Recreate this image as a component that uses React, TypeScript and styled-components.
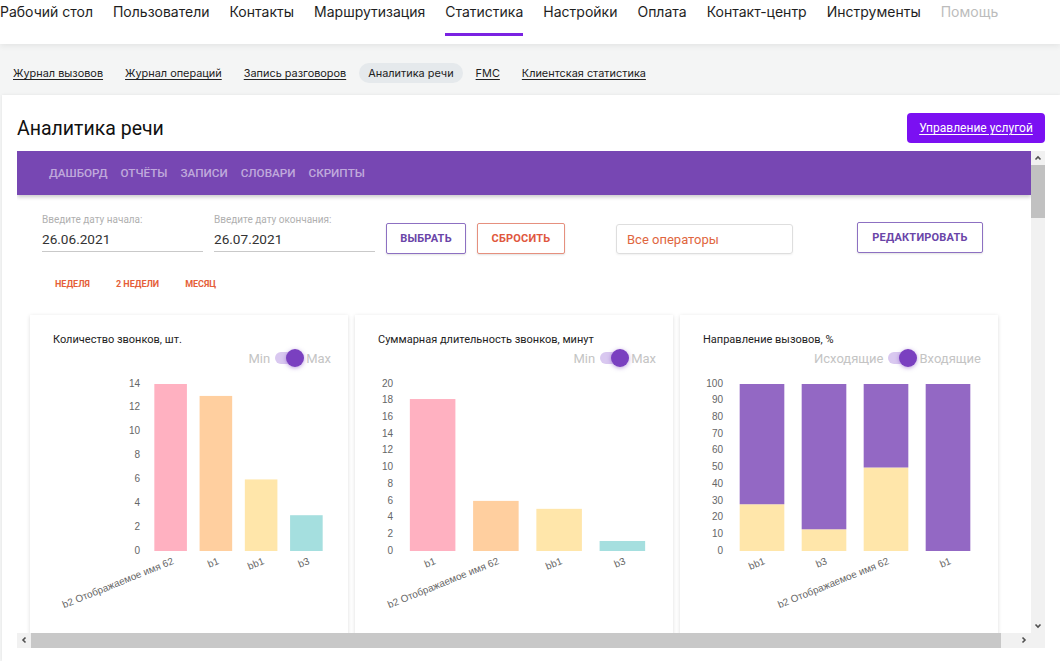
import React from 'react';
import styled, { createGlobalStyle } from 'styled-components';

const GlobalStyle = createGlobalStyle`
  html, body { margin: 0; padding: 0; }
  body { background: #f4f5f5; font-family: Inter, "Noto Sans", sans-serif; overflow: hidden; }
  * { box-sizing: border-box; }
`;

const Page = styled.div`
  width: 1060px;
  height: 661px;
  display: flex;
  flex-direction: column;
  overflow: hidden;
`;

const TopNav = styled.nav`
  height: 44px;
  flex-shrink: 0;
  background: #fff;
  display: flex;
  align-items: flex-start;
  gap: 20px;
  box-shadow: 0 2px 6px rgba(0, 0, 0, 0.07);
  position: relative;
  z-index: 1;
`;

const NavItem = styled.a<{ $active?: boolean; $muted?: boolean }>`
  display: block;
  height: 36px;
  padding-top: 2px;
  line-height: 20px;
  font-size: 14px;
  color: ${(p) => (p.$muted ? '#bcbcbc' : '#1e1e1e')};
  border-bottom: 3px solid ${(p) => (p.$active ? '#7a22e2' : 'transparent')};
  white-space: nowrap;
  cursor: pointer;
`;

const SubNav = styled.div`
  height: 51px;
  flex-shrink: 0;
  display: flex;
  align-items: flex-start;
  padding: 19px 0 0 4px;
  gap: 4px;
`;

const SubLink = styled.a<{ $active?: boolean }>`
  display: block;
  height: 20px;
  line-height: 20px;
  padding: 0 9px;
  font-size: 10.9px;
  color: #222;
  border-radius: 10px;
  background: ${(p) => (p.$active ? '#e5e9ec' : 'transparent')};
  text-decoration: ${(p) => (p.$active ? 'none' : 'underline')};
  text-underline-offset: 2px;
  white-space: nowrap;
  cursor: pointer;
`;

const MainCard = styled.section`
  flex: 1;
  margin-left: 2px;
  background: #fff;
  box-shadow: 0 0 3px rgba(0, 0, 0, 0.08);
  padding: 18px 15px 0 15px;
  display: flex;
  flex-direction: column;
`;

const HeaderRow = styled.div`
  height: 30px;
  display: flex;
  align-items: center;
  justify-content: space-between;
  margin-bottom: 8px;
`;

const PageTitle = styled.h1`
  margin: 0;
  font-family: Roboto, Arial, sans-serif;
  font-weight: 400;
  font-size: 19.5px;
  color: #111;
`;

const ManageButton = styled.button`
  width: 138px;
  height: 30px;
  border: none;
  border-radius: 4px;
  background: #7b10f2;
  color: #fff;
  font-family: Roboto, Arial, sans-serif;
  font-size: 12px;
  text-decoration: underline;
  text-underline-offset: 2px;
  cursor: pointer;
`;

const Frame = styled.div`
  display: grid;
  grid-template-columns: 1014px 14px;
  grid-template-rows: 482px 15px;
  font-family: Roboto, Arial, sans-serif;
`;

const Viewport = styled.div`
  overflow: hidden;
  background: #fff;
`;

const Toolbar = styled.div`
  height: 44px;
  background: #7747b3;
  display: flex;
  align-items: center;
  gap: 13px;
  padding-left: 32px;
  box-shadow: 0 2px 4px rgba(0, 0, 0, 0.22);
`;

const ToolTab = styled.span`
  font-size: 11.7px;
  font-weight: 500;
  color: rgba(255, 255, 255, 0.55);
  text-transform: uppercase;
`;

const FilterRow = styled.div`
  margin-top: 19px;
  padding-left: 25px;
  display: flex;
  align-items: flex-end;
  gap: 11px;
`;

const DateField = styled.div`
  width: 161px;
  margin-bottom: 2px;
  display: flex;
  flex-direction: column;
  border-bottom: 1px solid #c9c9c9;
  padding-bottom: 2px;
`;

const DateLabel = styled.span`
  font-size: 10px;
  line-height: 12px;
  color: #b0b0b0;
`;

const DateValue = styled.span`
  margin-top: 3px;
  font-size: 13.6px;
  line-height: 20px;
  color: #333;
`;

const OutlineButton = styled.button<{ $tone: 'purple' | 'red'; $w: number; $shift?: number; $lift?: number }>`
  width: ${(p) => p.$w}px;
  height: 31px;
  margin-left: ${(p) => p.$shift ?? 0}px;
  margin-bottom: ${(p) => p.$lift ?? 0}px;
  background: #fff;
  border: 1px solid ${(p) => (p.$tone === 'purple' ? '#8d70c2' : '#e6907e')};
  border-radius: 2px;
  box-shadow: 0 1px 2px rgba(0, 0, 0, 0.12);
  color: ${(p) => (p.$tone === 'purple' ? '#6a45a8' : '#e0583e')};
  font-family: Roboto, Arial, sans-serif;
  font-size: 11px;
  font-weight: 700;
  letter-spacing: 0.2px;
  cursor: pointer;
`;

const Select = styled.div`
  width: 177px;
  height: 30px;
  margin-left: 40px;
  border: 1px solid #dedede;
  border-radius: 3px;
  box-shadow: 0 1px 2px rgba(0, 0, 0, 0.06);
  display: flex;
  align-items: center;
  padding-left: 10px;
  font-size: 13px;
  color: #e0663e;
`;

const PeriodRow = styled.div`
  margin-top: 20px;
  padding-left: 25px;
  display: flex;
`;

const PeriodButton = styled.button`
  height: 20px;
  padding: 0 13px;
  border: none;
  background: transparent;
  font-family: Roboto, Arial, sans-serif;
  font-size: 9px;
  font-weight: 700;
  color: #e55f3a;
  cursor: pointer;
`;

const CardsRow = styled.div`
  margin-top: 21px;
  padding-left: 13px;
  display: flex;
  gap: 7px;
`;

const ChartCard = styled.div`
  width: 318px;
  height: 330px;
  flex-shrink: 0;
  background: #fff;
  box-shadow: 0 1px 4px rgba(0, 0, 0, 0.14);
  display: flex;
  flex-direction: column;
`;

const CardHead = styled.div`
  padding: 18px 17px 0 23px;
`;

const CardTitle = styled.div`
  font-size: 11px;
  line-height: 14px;
  color: #222;
`;

const ToggleRow = styled.div`
  height: 22px;
  display: flex;
  justify-content: flex-end;
  align-items: center;
  gap: 5px;
  font-size: 13px;
  color: #c4c4c4;
`;

const SwitchTrack = styled.span`
  width: 26px;
  height: 12px;
  border-radius: 6px;
  background: #d9c8f0;
  display: flex;
  align-items: center;
  justify-content: flex-end;
`;

const SwitchThumb = styled.span`
  width: 18px;
  height: 18px;
  margin-right: -3px;
  border-radius: 50%;
  background: #7a40c0;
  box-shadow: 0 1px 4px rgba(122, 64, 192, 0.5);
`;

const ChartSvg = styled.svg`
  display: block;
  font-family: "Liberation Sans", Arial, sans-serif;
`;

const ScrollV = styled.div`
  background: #f1f1f1;
  display: flex;
  flex-direction: column;
`;

const ScrollH = styled.div`
  background: #f1f1f1;
  display: flex;
`;

const ScrollCorner = styled.div`
  background: #f1f1f1;
`;

const ArrowBox = styled.div`
  width: 14px;
  height: 14px;
  flex-shrink: 0;
  display: flex;
  align-items: center;
  justify-content: center;
`;

const Spacer = styled.div`
  flex: 1;
`;

const ThumbV = styled.div`
  height: 53px;
  background: #c1c1c1;
`;

const ThumbH = styled.div`
  width: 970px;
  height: 15px;
  background: #c8c8c8;
`;

const Chevron = ({ dir }: { dir: 'up' | 'down' | 'left' | 'right' }) => {
  const rot = { up: 0, right: 90, down: 180, left: 270 }[dir];
  return (
    <svg width="8" height="8" viewBox="0 0 8 8">
      <polyline
        points="1.5,5.5 4,3 6.5,5.5"
        fill="none"
        stroke="#505050"
        strokeWidth="1.6"
        transform={`rotate(${rot} 4 4)`}
      />
    </svg>
  );
};

type Seg = { value: number; color: string };
type BarDef = { label: string; segs: Seg[] };

const PINK = '#ffb1c1';
const ORANGE = '#ffcf9f';
const YELLOW = '#ffe6aa';
const TEAL = '#a5dfdf';
const PURPLE = '#9368c4';

const Y0 = 182;
const YTOP = 15;
const PLOT_RIGHT = 299;

function BarChart({ yMax, yStep, plotLeft, bars, ratio }: { yMax: number; yStep: number; plotLeft: number; bars: BarDef[]; ratio: number }) {
  const ticks: number[] = [];
  for (let v = 0; v <= yMax; v += yStep) ticks.push(v);
  const scale = (Y0 - YTOP) / yMax;
  const pitch = (PLOT_RIGHT - plotLeft) / bars.length;
  const bw = pitch * ratio;
  return (
    <ChartSvg width={318} height={276} viewBox="0 0 318 276">
      {ticks.map((t) => (
        <text key={t} x={plotLeft - 8} y={Y0 - t * scale} textAnchor="end" dominantBaseline="middle" fontSize="10" fill="#666">
          {t}
        </text>
      ))}
      {bars.map((b, i) => {
        const cx = plotLeft + pitch * (i + 0.5);
        let base = Y0;
        return (
          <g key={i}>
            {b.segs.map((s, j) => {
              const h = s.value * scale;
              base -= h;
              return <rect key={j} x={cx - bw / 2} y={base} width={bw} height={h} fill={s.color} />;
            })}
            <text
              x={cx + 1}
              y={188}
              textAnchor="end"
              dominantBaseline="hanging"
              fontSize="10"
              fill="#666"
              transform={`rotate(-22 ${cx + 1} 188)`}
            >
              {b.label}
            </text>
          </g>
        );
      })}
    </ChartSvg>
  );
}

const LONG = 'b2 Отображаемое имя 62';

const chart1: BarDef[] = [
  { label: LONG, segs: [{ value: 14, color: PINK }] },
  { label: 'b1', segs: [{ value: 13, color: ORANGE }] },
  { label: 'bb1', segs: [{ value: 6, color: YELLOW }] },
  { label: 'b3', segs: [{ value: 3, color: TEAL }] },
];

const chart2: BarDef[] = [
  { label: 'b1', segs: [{ value: 18.2, color: PINK }] },
  { label: LONG, segs: [{ value: 6, color: ORANGE }] },
  { label: 'bb1', segs: [{ value: 5.05, color: YELLOW }] },
  { label: 'b3', segs: [{ value: 1.2, color: TEAL }] },
];

const chart3: BarDef[] = [
  { label: 'bb1', segs: [{ value: 28, color: YELLOW }, { value: 72, color: PURPLE }] },
  { label: 'b3', segs: [{ value: 13, color: YELLOW }, { value: 87, color: PURPLE }] },
  { label: LONG, segs: [{ value: 50, color: YELLOW }, { value: 50, color: PURPLE }] },
  { label: 'b1', segs: [{ value: 0, color: YELLOW }, { value: 100, color: PURPLE }] },
];

function Card({ title, left, right, children }: { title: string; left: string; right: string; children: React.ReactNode }) {
  return (
    <ChartCard>
      <CardHead>
        <CardTitle>{title}</CardTitle>
        <ToggleRow>
          <span>{left}</span>
          <SwitchTrack>
            <SwitchThumb />
          </SwitchTrack>
          <span>{right}</span>
        </ToggleRow>
      </CardHead>
      {children}
    </ChartCard>
  );
}

const navItems = ['Рабочий стол', 'Пользователи', 'Контакты', 'Маршрутизация', 'Статистика', 'Настройки', 'Оплата', 'Контакт-центр', 'Инструменты'];
const subItems = ['Журнал вызовов', 'Журнал операций', 'Запись разговоров', 'Аналитика речи', 'FMC', 'Клиентская статистика'];
const tabs = ['Дашборд', 'Отчёты', 'Записи', 'Словари', 'Скрипты'];

export default function App() {
  return (
    <Page>
      <GlobalStyle />
      <TopNav>
        {navItems.map((n) => (
          <NavItem key={n} $active={n === 'Статистика'}>
            {n}
          </NavItem>
        ))}
        <NavItem $muted>Помощь</NavItem>
      </TopNav>
      <SubNav>
        {subItems.map((s) => (
          <SubLink key={s} $active={s === 'Аналитика речи'}>
            {s}
          </SubLink>
        ))}
      </SubNav>
      <MainCard>
        <HeaderRow>
          <PageTitle>Аналитика речи</PageTitle>
          <ManageButton>Управление услугой</ManageButton>
        </HeaderRow>
        <Frame>
          <Viewport>
            <Toolbar>
              {tabs.map((t) => (
                <ToolTab key={t}>{t}</ToolTab>
              ))}
            </Toolbar>
            <FilterRow>
              <DateField>
                <DateLabel>Введите дату начала:</DateLabel>
                <DateValue>26.06.2021</DateValue>
              </DateField>
              <DateField>
                <DateLabel>Введите дату окончания:</DateLabel>
                <DateValue>26.07.2021</DateValue>
              </DateField>
              <OutlineButton $tone="purple" $w={80}>ВЫБРАТЬ</OutlineButton>
              <OutlineButton $tone="red" $w={88}>СБРОСИТЬ</OutlineButton>
              <Select>Все операторы</Select>
              <OutlineButton $tone="purple" $w={126} $shift={53} $lift={1}>
                РЕДАКТИРОВАТЬ
              </OutlineButton>
            </FilterRow>
            <PeriodRow>
              <PeriodButton>НЕДЕЛЯ</PeriodButton>
              <PeriodButton>2 НЕДЕЛИ</PeriodButton>
              <PeriodButton>МЕСЯЦ</PeriodButton>
            </PeriodRow>
            <CardsRow>
              <Card title="Количество звонков, шт." left="Min" right="Max">
                <BarChart yMax={14} yStep={2} plotLeft={118} bars={chart1} ratio={0.72} />
              </Card>
              <Card title="Суммарная длительность звонков, минут" left="Min" right="Max">
                <BarChart yMax={20} yStep={2} plotLeft={46} bars={chart2} ratio={0.72} />
              </Card>
              <Card title="Направление вызовов, %" left="Исходящие" right="Входящие">
                <BarChart yMax={100} yStep={10} plotLeft={51} bars={chart3} ratio={0.72} />
              </Card>
            </CardsRow>
          </Viewport>
          <ScrollV>
            <ArrowBox>
              <Chevron dir="up" />
            </ArrowBox>
            <ThumbV />
            <Spacer />
            <ArrowBox>
              <Chevron dir="down" />
            </ArrowBox>
          </ScrollV>
          <ScrollH>
            <ArrowBox>
              <Chevron dir="left" />
            </ArrowBox>
            <ThumbH />
            <Spacer />
            <ArrowBox>
              <Chevron dir="right" />
            </ArrowBox>
          </ScrollH>
          <ScrollCorner />
        </Frame>
      </MainCard>
    </Page>
  );
}
